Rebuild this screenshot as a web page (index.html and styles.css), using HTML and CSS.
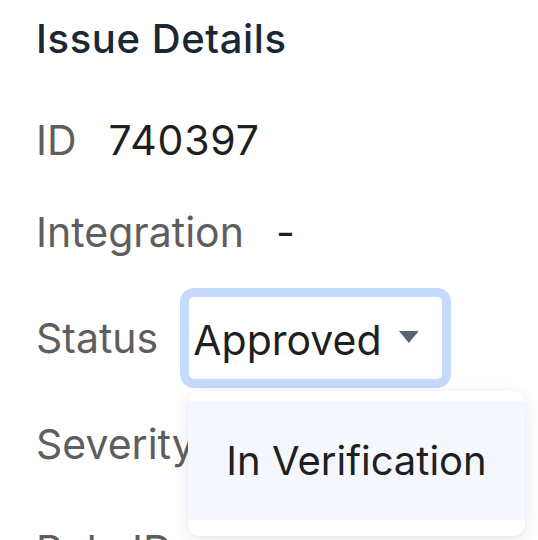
FILE: index.html
```html
<!DOCTYPE html>
<html lang="en">
<head>
<meta charset="utf-8">
<title>Issue Details</title>
<link rel="stylesheet" href="styles.css">
</head>
<body>
<section class="panel">
  <h2 class="title">Issue Details</h2>
  <div class="fields">
    <div class="row">
      <span class="label">ID</span>
      <span class="value">740397</span>
    </div>
    <div class="row">
      <span class="label">Integration</span>
      <span class="value">-</span>
    </div>
    <div class="row row-tall">
      <span class="label">Status</span>
      <div class="select-wrap">
        <div class="select">
          <span class="select-text">Approved</span>
          <svg class="caret" width="20" height="12" viewBox="0 0 20 12"><path d="M0 0 H20 L10 12 Z" fill="#5a6276"/></svg>
        </div>
        <ul class="menu">
          <li class="menu-item">In Verification</li>
        </ul>
      </div>
    </div>
    <div class="row">
      <span class="label">Severity</span>
    </div>
    <div class="row row-tall">
      <span class="label">Rule ID</span>
    </div>
  </div>
</section>
</body>
</html>
```

FILE: styles.css
```css
html, body {
  margin: 0;
  padding: 0;
  background: #ffffff;
}

body {
  font-family: Inter, "Noto Sans", sans-serif;
  overflow: hidden;
}

.panel {
  padding: 15px 0 0 36px;
}

.title {
  margin: 0;
  font-size: 40px;
  line-height: 48px;
  font-weight: 500;
  color: #1b2734;
  letter-spacing: 0.6px;
}

.fields {
  display: flex;
  flex-direction: column;
  gap: 20px;
  margin-top: 41px;
}

.row {
  display: flex;
  align-items: center;
  gap: 22px;
  height: 72px;
  font-size: 41px;
  line-height: 72px;
}

.row-tall {
  height: 100px;
}

.label {
  color: #5e5e5e;
}

.value {
  color: #1f1f1f;
  padding-left: 10px;
  letter-spacing: 0.8px;
}

.select-wrap {
  position: relative;
}

.select {
  box-sizing: border-box;
  display: flex;
  align-items: center;
  gap: 17px;
  height: 100px;
  width: 271px;
  padding: 0 24px 0 4px;
  border: 9px solid #c6dafc;
  border-radius: 14px;
  background: #ffffff;
  color: #1f1f1f;
}

.select-text {
  flex: 1;
  padding-top: 4px;
}

.caret {
  display: block;
  margin-top: -2px;
}

.menu {
  position: absolute;
  top: calc(100% + 3px);
  left: 8px;
  width: 337px;
  margin: 0;
  padding: 10px 0 16px;
  list-style: none;
  background: #ffffff;
  border-radius: 12px;
  box-shadow: 0 4px 18px rgba(0, 0, 0, 0.09), 0 1px 3px rgba(0, 0, 0, 0.04);
}

.menu-item {
  height: 119px;
  line-height: 119px;
  padding-left: 38px;
  background: #f4f7fe;
  color: #1f1f1f;
  font-size: 40px;
}
```
